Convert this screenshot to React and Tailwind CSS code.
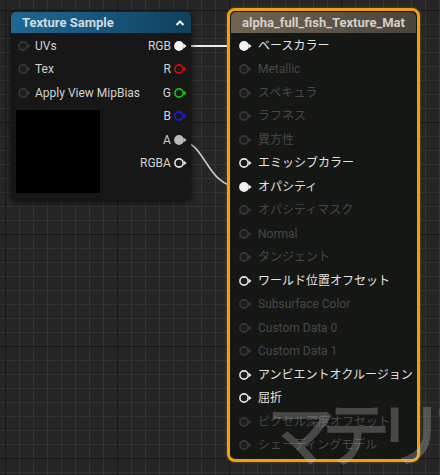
import React from "react";

const FONT = "font-['Roboto','Noto_Sans_CJK_JP',sans-serif]";

function Pin({ kind = "dim", color }) {
  let stroke, fill;
  if (kind === "filled") {
    stroke = color || "#f2f2f2";
    fill = color || "#f2f2f2";
  } else if (kind === "ring") {
    stroke = color || "#e4e4e4";
    fill = "#1a1a1a";
  } else {
    stroke = "#383838";
    fill = "#1d1d1d";
  }
  return (
    <svg width="14" height="12" viewBox="0 0 14 12" className="shrink-0">
      <circle cx="5" cy="6" r="4.1" fill={fill} stroke={stroke} strokeWidth="1.6" />
      <path d="M9.6 3.6 L12.6 6 L9.6 8.4 Z" fill={stroke} />
    </svg>
  );
}

const leftInputs = ["UVs", "Tex", "Apply View MipBias"];
const leftOutputs = [
  { label: "RGB", kind: "filled" },
  { label: "R", kind: "ring", color: "#d40c0c" },
  { label: "G", kind: "ring", color: "#17c617" },
  { label: "B", kind: "ring", color: "#1a1ae0" },
  { label: "A", kind: "filled", color: "#b9b9b9" },
  { label: "RGBA", kind: "ring" },
];

const rightInputs = [
  { label: "ベースカラー", kind: "filled" },
  { label: "Metallic" },
  { label: "スペキュラ" },
  { label: "ラフネス" },
  { label: "異方性" },
  { label: "エミッシブカラー", kind: "ring" },
  { label: "オパシティ", kind: "filled" },
  { label: "オパシティマスク" },
  { label: "Normal" },
  { label: "タンジェント" },
  { label: "ワールド位置オフセット", kind: "ring" },
  { label: "Subsurface Color" },
  { label: "Custom Data 0" },
  { label: "Custom Data 1" },
  { label: "アンビエントオクルージョン", kind: "ring" },
  { label: "屈折", kind: "ring" },
  { label: "ピクセル深度オフセット" },
  { label: "シェーディングモデル" },
];

export default function App() {
  return (
    <div
      className={`relative w-[440px] h-[475px] overflow-hidden bg-[#262626] ${FONT} [background-image:linear-gradient(#171717_1px,transparent_1px),linear-gradient(90deg,#171717_1px,transparent_1px),linear-gradient(#333333_1px,transparent_1px),linear-gradient(90deg,#333333_1px,transparent_1px)] [background-size:112px_112px,112px_112px,14px_14px,14px_14px] [background-position:5px_10px,5px_10px,5px_10px,5px_10px]`}
    >
      {/* wires */}
      <svg className="absolute inset-0" width="440" height="475" viewBox="0 0 440 475">
        <path d="M180 46 L240 46" stroke="#ececec" strokeWidth="2" fill="none" />
        <path d="M180 141 C 206 141, 206 187, 240 187" stroke="#c9c9c9" strokeWidth="1.6" fill="none" />
      </svg>

      {/* Texture Sample node */}
      <div className="absolute left-[11px] top-[12px] w-[180px] rounded-[5px] bg-[#171717] shadow-[0_2px_6px_rgba(0,0,0,0.7)] overflow-hidden">
        <div className="h-[21px] flex items-center justify-between pl-[11px] pr-[6px] bg-[linear-gradient(90deg,#1e6892,#165479_55%,#123f5c)]">
          <span className="text-[13px] font-bold text-[#d3dbe1] leading-none">Texture Sample</span>
          <svg width="10" height="8" viewBox="0 0 10 8">
            <path d="M1.5 6 L5 2.5 L8.5 6" stroke="#e8eef2" strokeWidth="2" fill="none" />
          </svg>
        </div>
        <div className="flex justify-between pt-[1px] pb-[7px]">
          <div className="flex flex-col pl-[7px]">
            {leftInputs.map((l) => (
              <div key={l} className="h-[23.5px] flex items-center gap-[3px]">
                <Pin kind="dim" />
                <span className="text-[12px] text-[#d2d2d2] whitespace-nowrap">{l}</span>
              </div>
            ))}
            <div className="mt-[5px] ml-[-2px] w-[84px] h-[83px] bg-black" />
          </div>
          <div className="flex flex-col items-end pr-[8px]">
            {leftOutputs.map((o) => (
              <div key={o.label} className="h-[23.5px] flex items-center gap-[3px]">
                <span className="text-[12px] text-[#d2d2d2] whitespace-nowrap">{o.label}</span>
                <Pin kind={o.kind} color={o.color} />
              </div>
            ))}
          </div>
        </div>
      </div>

      {/* Material node */}
      <div className="absolute left-[227px] top-[8px] w-[193px] h-[454px] rounded-[8px] border-[3px] border-[#f0a00e] bg-[#151714] p-[1px] shadow-[0_0_3px_rgba(240,160,14,0.4)]">
        <div className="h-[21px] rounded-t-[5px] flex items-center pl-[11px] bg-[linear-gradient(90deg,#6f6451,#5b5347_55%,#48433c)]">
          <span className="text-[13px] font-bold text-[#d4d0c8] leading-none">alpha_full_fish_Texture_Mat</span>
        </div>
        <div className="flex flex-col pt-[1px] pl-[8px]">
          {rightInputs.map((r) => {
            const active = r.kind === "filled" || r.kind === "ring";
            return (
              <div key={r.label} className="h-[23.5px] flex items-center gap-[5px]">
                <Pin kind={r.kind || "dim"} />
                <span className={`text-[12px] whitespace-nowrap ${active ? "text-[#e2e2e2]" : "text-[#474747]"}`}>
                  {r.label}
                </span>
              </div>
            );
          })}
        </div>
      </div>

      {/* watermark */}
      <div className="absolute left-[266px] top-[396px] text-[70px] leading-none tracking-[-15px] whitespace-nowrap font-medium text-[rgba(205,205,205,0.28)] font-['Noto_Sans_CJK_JP',sans-serif]">
        マテリアル
      </div>
    </div>
  );
}
